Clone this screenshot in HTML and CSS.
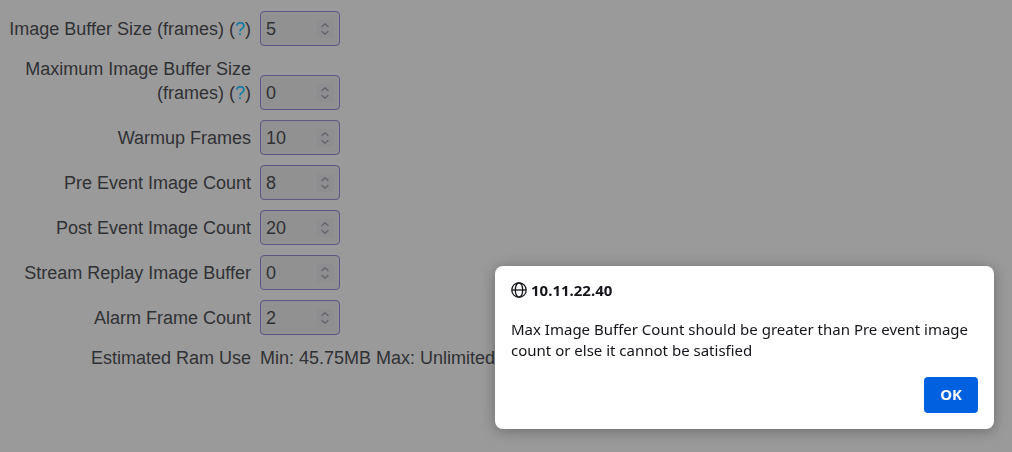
FILE: index.html
```html
<!DOCTYPE html>
<html lang="en">

<head>
    <meta charset="utf-8">
    <meta name="viewport" content="width=device-width, initial-scale=1">
    <title>Monitor - Buffers</title>
    <link rel="stylesheet" href="styles.css">
</head>

<body>
    <svg class="defs" aria-hidden="true">
        <symbol id="arrows" viewBox="0 0 18 18">
            <path d="M6 6.5 L9 3.7 L12 6.5 M6 11.5 L9 14.3 L12 11.5" />
        </symbol>
    </svg>

    <form id="buffers">
        <table class="settings">
            <tbody>
                <tr>
                    <th scope="row"><label for="image-buffer">Image Buffer Size (frames)</label> (<a href="#help">?</a>)</th>
                    <td>
                        <div class="number">
                            <input type="number" id="image-buffer" value="5" min="0">
                            <svg class="spinner"><use href="#arrows" /></svg>
                        </div>
                    </td>
                </tr>
                <tr>
                    <th scope="row"><label for="max-buffer">Maximum Image Buffer Size (frames)</label> (<a href="#help">?</a>)</th>
                    <td>
                        <div class="number">
                            <input type="number" id="max-buffer" value="0" min="0">
                            <svg class="spinner"><use href="#arrows" /></svg>
                        </div>
                    </td>
                </tr>
                <tr>
                    <th scope="row"><label for="warmup">Warmup Frames</label></th>
                    <td>
                        <div class="number">
                            <input type="number" id="warmup" value="10" min="0">
                            <svg class="spinner"><use href="#arrows" /></svg>
                        </div>
                    </td>
                </tr>
                <tr>
                    <th scope="row"><label for="pre-event">Pre Event Image Count</label></th>
                    <td>
                        <div class="number">
                            <input type="number" id="pre-event" value="8" min="0">
                            <svg class="spinner"><use href="#arrows" /></svg>
                        </div>
                    </td>
                </tr>
                <tr>
                    <th scope="row"><label for="post-event">Post Event Image Count</label></th>
                    <td>
                        <div class="number">
                            <input type="number" id="post-event" value="20" min="0">
                            <svg class="spinner"><use href="#arrows" /></svg>
                        </div>
                    </td>
                </tr>
                <tr>
                    <th scope="row"><label for="stream-replay">Stream Replay Image Buffer</label></th>
                    <td>
                        <div class="number">
                            <input type="number" id="stream-replay" value="0" min="0">
                            <svg class="spinner"><use href="#arrows" /></svg>
                        </div>
                    </td>
                </tr>
                <tr>
                    <th scope="row"><label for="alarm-frames">Alarm Frame Count</label></th>
                    <td>
                        <div class="number">
                            <input type="number" id="alarm-frames" value="2" min="0">
                            <svg class="spinner"><use href="#arrows" /></svg>
                        </div>
                    </td>
                </tr>
                <tr>
                    <th scope="row">Estimated Ram Use</th>
                    <td class="plain">Min: 45.75MB Max: Unlimited</td>
                </tr>
            </tbody>
        </table>
    </form>

    <dialog class="alert" open aria-labelledby="alert-title">
        <div class="alert-title">
            <svg class="globe" viewBox="0 0 16 16" aria-hidden="true">
                <circle cx="8" cy="8" r="7.2" />
                <ellipse cx="8" cy="8" rx="3.7" ry="7.2" />
                <path d="M1 8h14" />
            </svg>
            <span id="alert-title">10.11.22.40</span>
        </div>
        <p class="alert-text">Max Image Buffer Count should be greater than Pre event image count or else it cannot be satisfied</p>
        <form class="alert-buttons" method="dialog">
            <button>OK</button>
        </form>
    </dialog>
</body>

</html>
```

FILE: styles.css
```css
html,
body {
    margin: 0;
    padding: 0;
}

body {
    min-height: 100vh;
    background-color: #9a9a9b;
    font-family: "Liberation Sans", Arial, sans-serif;
    font-size: 18px;
    line-height: 24px;
    color: #303133;
}

.defs {
    display: none;
}

#buffers {
    padding-top: 6px;
}

.settings {
    border-collapse: collapse;
}

.settings th,
.settings td {
    padding: 5px 0;
    vertical-align: bottom;
}

.settings th,
.settings .plain {
    padding: 6px 0 10px;
}

.settings th {
    box-sizing: border-box;
    width: 251px;
    font-weight: normal;
    text-align: right;
}

.settings td,
.settings .plain {
    padding-left: 9px;
}

.settings a {
    color: #087ba4;
    text-decoration: none;
}

.number {
    position: relative;
    width: 80px;
}

.number input {
    display: block;
    box-sizing: border-box;
    width: 100%;
    height: 35px;
    margin: 0;
    padding: 1px 24px 0 5px;
    border: 1px solid #5d5783;
    border-radius: 4px;
    background-color: #919192;
    font: inherit;
    color: #303133;
    appearance: textfield;
}

.number input::-webkit-inner-spin-button {
    display: none;
}

.spinner {
    position: absolute;
    top: 9px;
    right: 6px;
    width: 18px;
    height: 18px;
    background-color: #8e8e91;
    fill: none;
    stroke: #66666d;
    stroke-width: 1.5;
    stroke-linecap: round;
    stroke-linejoin: round;
    pointer-events: none;
}

.alert {
    position: fixed;
    inset: auto 18px 23px auto;
    box-sizing: border-box;
    width: 499px;
    max-width: calc(100% - 36px);
    margin: 0;
    padding: 15px 16px 16px;
    border: none;
    border-radius: 8px;
    background-color: #fff;
    box-shadow: 0 2px 14px rgba(0, 0, 0, 0.3);
    font-family: "Noto Sans", sans-serif;
    font-size: 15px;
    line-height: 21px;
    color: #15141a;
}

.alert-title {
    display: flex;
    align-items: center;
    gap: 4px;
    height: 18px;
    font-weight: bold;
}

.globe {
    width: 16px;
    height: 16px;
    fill: none;
    stroke: #15141a;
    stroke-width: 1.3;
}

.alert-text {
    margin: 20px 0 16px;
}

.alert-buttons {
    display: flex;
    justify-content: flex-end;
}

.alert-buttons button {
    height: 36px;
    padding: 0 16px 1px;
    border: none;
    border-radius: 4px;
    background-color: #0061e0;
    font: inherit;
    font-weight: bold;
    color: #fbfbfe;
}
```
